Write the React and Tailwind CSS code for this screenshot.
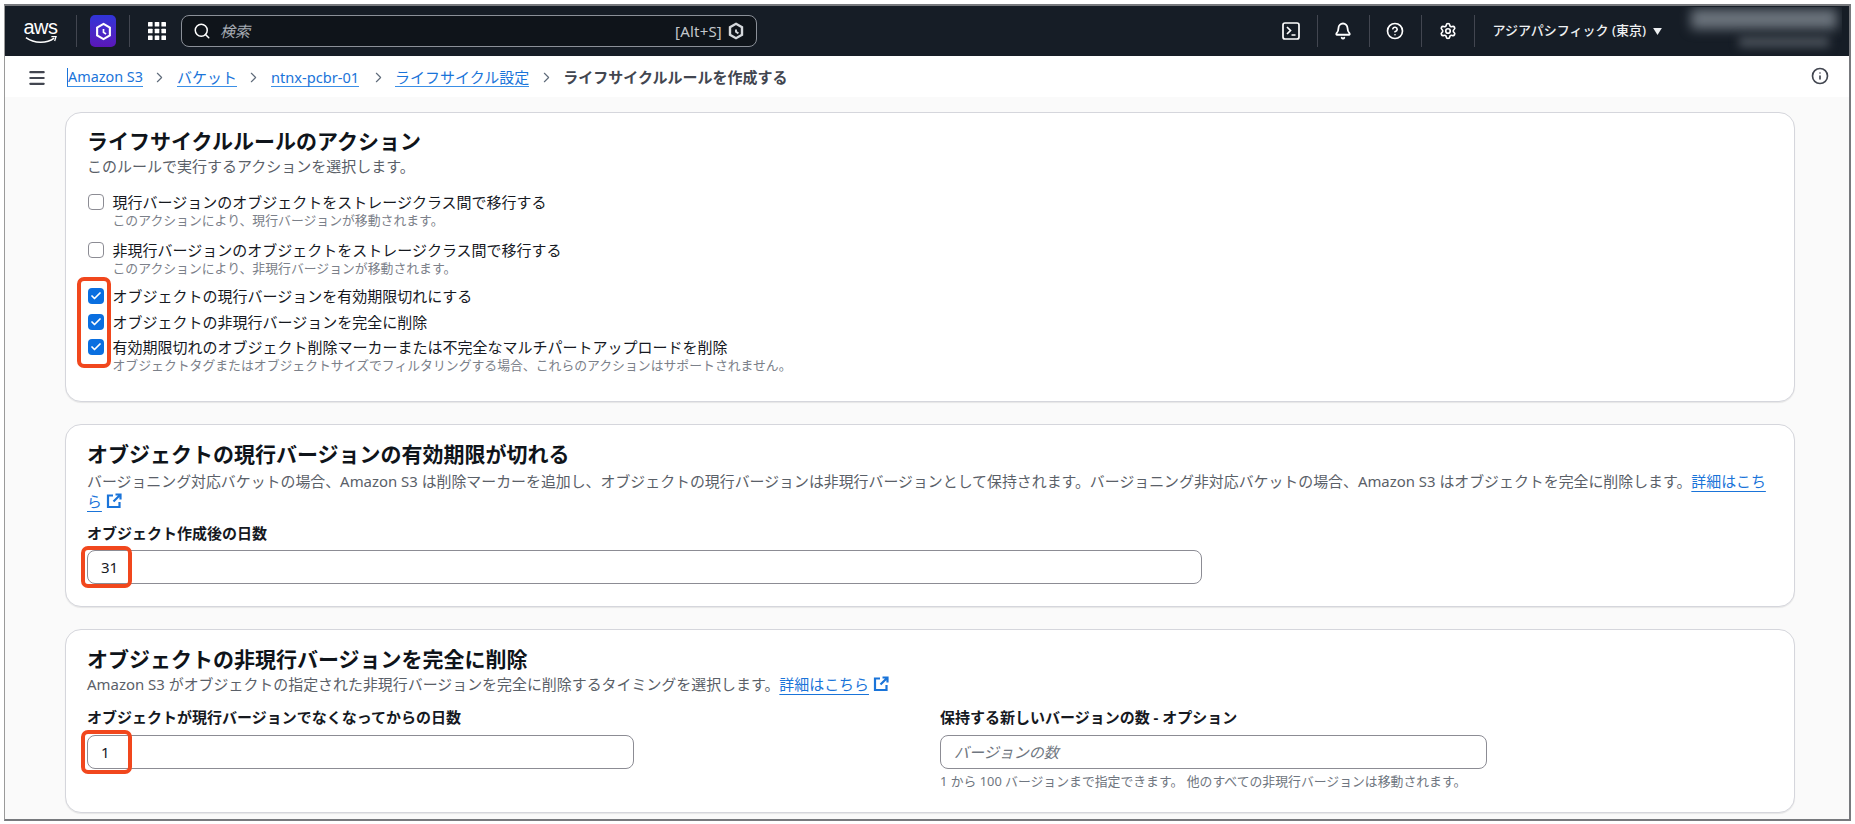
import React from "react";
import { Search, Bell, CircleHelp, Settings, Info, Menu, ChevronRight, Check } from "lucide-react";

function Ext() {
  return (
    <svg viewBox="0 0 16 16" className="inline-block w-[16px] h-[16px] ml-[4px] align-[-2px]" fill="none" stroke="#1a74d9" strokeWidth="2.2">
      <path d="M7 2.5H2v11.5h11.5V9" />
      <path d="M9.5 1.5h5v5M14.5 1.5 7.5 8.5" />
    </svg>
  );
}

function Crumb({ children, className = "" }) {
  return <a className={"text-[#1a74d9] border-b-[1.5px] border-[#3b8fe6] leading-[18px] whitespace-nowrap " + className}>{children}</a>;
}

function Sep() {
  return <ChevronRight className="w-[17px] h-[17px] text-[#5f6b7a] mx-[8.5px]" strokeWidth={1.6} />;
}

function Box({ checked }) {
  return checked ? (
    <span className="w-[16px] h-[16px] rounded-[4px] bg-[#0a6fe0] flex items-center justify-center shrink-0">
      <Check className="w-[12px] h-[12px] text-white" strokeWidth={3.5} />
    </span>
  ) : (
    <span className="w-[16px] h-[16px] rounded-[4px] border border-[#8c8c94] bg-white shrink-0" />
  );
}

function Row({ checked, label, desc, className = "", descClass = "-mt-[1px]" }) {
  return (
    <div className={"flex items-start " + className}>
      <div className="h-[22px] flex items-center w-[25.5px] shrink-0 pl-[1px]">
        <Box checked={checked} />
      </div>
      <div>
        <div className="text-[15px] leading-[22px] text-[#16191f] whitespace-nowrap">{label}</div>
        {desc && <div className={"text-[12.85px] leading-[17px] text-[#7b8089] whitespace-nowrap " + descClass}>{desc}</div>}
      </div>
    </div>
  );
}

function Card({ title, children, className = "" }) {
  return (
    <section className={"w-[1730px] bg-white border border-[#d5d6dc] rounded-[16px] px-[21px] shadow-[0_1px_1px_rgba(0,0,0,0.08)] " + className}>
      <h2 className="text-[21px] leading-[28px] font-bold text-[#0f141a] whitespace-nowrap">{title}</h2>
      {children}
    </section>
  );
}

function Flag({ className }) {
  return <span className={"absolute border-[4px] border-[#f1471d] rounded-[7px] pointer-events-none " + className} />;
}

function Field({ value, placeholder, className = "", flag }) {
  return (
    <div className={"relative h-[34px] border border-[#8c8c94] rounded-[8px] bg-white flex items-center px-[13px] text-[15px] " + className}>
      {value ? <span className="text-[#16191f]">{value}</span> : <span className="italic text-[#6f7680]">{placeholder}</span>}
      {flag}
    </div>
  );
}

function Divider() {
  return <span className="w-px h-[32px] bg-[#424650]" />;
}

export default function App() {
  return (
    <div className="w-[1855px] h-[824px] bg-white pt-[4px] pl-[4px] overflow-hidden font-['Noto_Sans','Noto_Sans_CJK_JP',sans-serif]">
      <div className="w-[1847px] h-[817px] border-l border-r-2 border-y-2 border-l-[#9a9a9a] border-[#77797d] overflow-hidden flex flex-col bg-[#fafafa]">
        <header className="h-[50px] shrink-0 bg-[#161d26] flex items-center text-white">
          <div className="w-[71px] shrink-0 flex flex-col items-center">
            <span className="text-[20px] leading-[18px] tracking-[-0.5px] font-['Liberation_Sans',sans-serif]">aws</span>
            <svg viewBox="0 0 34 9" className="w-[32px] h-[9px]" fill="none">
              <path d="M1 1.5c9 6.5 22 6.5 30 0.5" stroke="#fff" strokeWidth="1.6" />
              <path d="M28 0.5h5l-1.5 4.5" stroke="#fff" strokeWidth="1.3" />
            </svg>
          </div>
          <Divider />
          <div className="ml-[13px] mr-[13px] w-[26px] h-[32px] rounded-[5px] bg-gradient-to-b from-[#2f34d8] to-[#5a16b8] flex items-center justify-center">
            <svg viewBox="0 0 20 22" className="w-[17px] h-[19px]" fill="none" stroke="#fff" strokeWidth="2.5">
              <path d="M10 2 17.5 6.3v9.4L10 20l-7.5-4.3V6.3z" />
              <path d="M10 8v4l3 2" strokeWidth="2" />
            </svg>
          </div>
          <Divider />
          <svg viewBox="0 0 18 18" className="w-[18px] h-[18px] ml-[18px] mr-[15px]" fill="#fff">
            <rect x="0" y="0" width="4.6" height="4.6" rx="0.6" /><rect x="6.7" y="0" width="4.6" height="4.6" rx="0.6" /><rect x="13.4" y="0" width="4.6" height="4.6" rx="0.6" />
            <rect x="0" y="6.7" width="4.6" height="4.6" rx="0.6" /><rect x="6.7" y="6.7" width="4.6" height="4.6" rx="0.6" /><rect x="13.4" y="6.7" width="4.6" height="4.6" rx="0.6" />
            <rect x="0" y="13.4" width="4.6" height="4.6" rx="0.6" /><rect x="6.7" y="13.4" width="4.6" height="4.6" rx="0.6" /><rect x="13.4" y="13.4" width="4.6" height="4.6" rx="0.6" />
          </svg>
          <div className="w-[576px] h-[32px] rounded-[8px] border-[1.5px] border-[#8b9098] bg-[#0f141a] flex items-center pl-[11px] pr-[12px]">
            <Search className="w-[18px] h-[18px] text-white" strokeWidth={2} />
            <span className="ml-[9px] text-[15px] italic text-[#a7adb5]">検索</span>
            <span className="ml-auto text-[15px] tracking-[0.2px] text-[#c3c7cc]">[Alt+S]</span>
            <svg viewBox="0 0 20 22" className="w-[16px] h-[18px] ml-[6px]" fill="none" stroke="#d5d8dc" strokeWidth="3">
              <path d="M10 2 17.5 6.3v9.4L10 20l-7.5-4.3V6.3z" />
              <path d="M10 9v3l3 2" strokeWidth="2.4" />
            </svg>
          </div>
          <div className="ml-auto flex items-center">
            <div className="w-[51px] flex justify-center">
              <svg viewBox="0 0 18 18" className="w-[18px] h-[18px]" fill="none" stroke="#fff" strokeWidth="1.7">
                <rect x="1" y="1" width="16" height="16" rx="2" />
                <path d="m5 5 3.5 3.5L5 12M9.5 13H13.5" />
              </svg>
            </div>
            <Divider />
            <div className="w-[51px] flex justify-center"><Bell className="w-[18px] h-[18px] text-white" strokeWidth={2.4} /></div>
            <Divider />
            <div className="w-[51px] flex justify-center"><CircleHelp className="w-[18px] h-[18px] text-white" strokeWidth={2.2} /></div>
            <Divider />
            <div className="w-[52px] flex justify-center"><Settings className="w-[18px] h-[18px] text-white" strokeWidth={2.2} /></div>
            <Divider />
            <span className="ml-[18px] text-[13px] font-medium text-[#eef0f2] whitespace-nowrap">アジアパシフィック (東京)</span>
            <svg viewBox="0 0 10 8" className="w-[9px] h-[7px] ml-[7px]" fill="#eef0f2"><path d="M0 0h10L5 8z" /></svg>
            <div className="ml-[17px] mr-[7px] w-[163px] h-[48px] relative overflow-hidden">
              <div className="absolute left-[12px] top-[2px] w-[146px] h-[20px] bg-[#6c747d] blur-[6px]" />
              <div className="absolute left-[60px] top-[30px] w-[90px] h-[10px] bg-[#4c535c] blur-[5px]" />
            </div>
          </div>
        </header>

        <nav className="h-[41px] shrink-0 bg-white flex items-center relative text-[15px] pt-[2px]">
          <Menu className="ml-[22px] w-[20px] h-[20px] text-[#424650] mr-[20px]" strokeWidth={2.6} />
          <Crumb className="border-l border-l-[#1a74d9] text-[14.4px]">Amazon S3</Crumb>
          <Sep />
          <Crumb>バケット</Crumb>
          <Sep />
          <Crumb className="text-[14.6px] mr-[2px]">ntnx-pcbr-01</Crumb>
          <Sep />
          <Crumb>ライフサイクル設定</Crumb>
          <Sep />
          <span className="font-semibold text-[#424650] whitespace-nowrap">ライフサイクルルールを作成する</span>
          <Info className="absolute right-[20px] top-[11px] w-[18px] h-[18px] text-[#424650]" strokeWidth={2.2} />
        </nav>

        <main className="flex-1 pl-[60px] pt-[15px] flex flex-col gap-[22px]">
          <Card title="ライフサイクルルールのアクション" className="h-[290px] pt-[14px]">
            <p className="text-[15px] leading-[22px] text-[#5a6068]">このルールで実行するアクションを選択します。</p>
            <div className="mt-[14px]">
              <Row label="現行バージョンのオブジェクトをストレージクラス間で移行する" desc="このアクションにより、現行バージョンが移動されます。" />
              <Row className="mt-[10px]" label="非現行バージョンのオブジェクトをストレージクラス間で移行する" desc="このアクションにより、非現行バージョンが移動されます。" />
              <div className="relative mt-[8px]">
                <Flag className="-left-[10px] -top-[8px] w-[34px] h-[91px]" />
                <Row checked label="オブジェクトの現行バージョンを有効期限切れにする" />
                <Row checked className="mt-[4px]" label="オブジェクトの非現行バージョンを完全に削除" />
                <Row checked className="mt-[3px]" label="有効期限切れのオブジェクト削除マーカーまたは不完全なマルチパートアップロードを削除" desc="オブジェクトタグまたはオブジェクトサイズでフィルタリングする場合、これらのアクションはサポートされません。" />
              </div>
            </div>
          </Card>

          <Card title="オブジェクトの現行バージョンの有効期限が切れる" className="h-[183px] pt-[15px]">
            <p className="text-[14.92px] leading-[20px] text-[#5a6068] mt-[3px]">
              バージョニング対応バケットの場合、Amazon S3 は削除マーカーを追加し、オブジェクトの現行バージョンは非現行バージョンとして保持されます。バージョニング非対応バケットの場合、Amazon S3 はオブジェクトを完全に削除します。<a className="text-[#1a74d9] underline underline-offset-[4px]">詳細はこち</a>
              <br />
              <a className="text-[#1a74d9] underline underline-offset-[4px]">ら</a><Ext />
            </p>
            <div className="text-[15px] leading-[20px] font-bold text-[#16191f] mt-[12px]">オブジェクト作成後の日数</div>
            <Field value="31" className="w-[1115px] mt-[7px]" flag={<Flag className="-left-[7px] -top-[5px] w-[51px] h-[42px]" />} />
          </Card>

          <Card title="オブジェクトの非現行バージョンを完全に削除" className="h-[184px] pt-[15px]">
            <p className="text-[14.95px] leading-[21px] text-[#5a6068] mt-[1px]">
              Amazon S3 がオブジェクトの指定された非現行バージョンを完全に削除するタイミングを選択します。<a className="text-[#1a74d9] underline underline-offset-[4px]">詳細はこちら</a><Ext />
            </p>
            <div className="flex mt-[12px]">
              <div className="w-[853px]">
                <div className="text-[15px] leading-[20px] font-bold text-[#16191f] whitespace-nowrap">オブジェクトが現行バージョンでなくなってからの日数</div>
                <Field value="1" className="w-[547px] mt-[8px]" flag={<Flag className="-left-[7px] -top-[6px] w-[51px] h-[44px]" />} />
              </div>
              <div>
                <div className="text-[15px] leading-[20px] font-bold text-[#16191f] whitespace-nowrap">保持する新しいバージョンの数 - オプション</div>
                <Field placeholder="バージョンの数" className="w-[547px] mt-[8px]" />
                <div className="text-[12.85px] leading-[16px] text-[#6f7680] mt-[4px] whitespace-nowrap">1 から 100 バージョンまで指定できます。 他のすべての非現行バージョンは移動されます。</div>
              </div>
            </div>
          </Card>
        </main>
      </div>
    </div>
  );
}
